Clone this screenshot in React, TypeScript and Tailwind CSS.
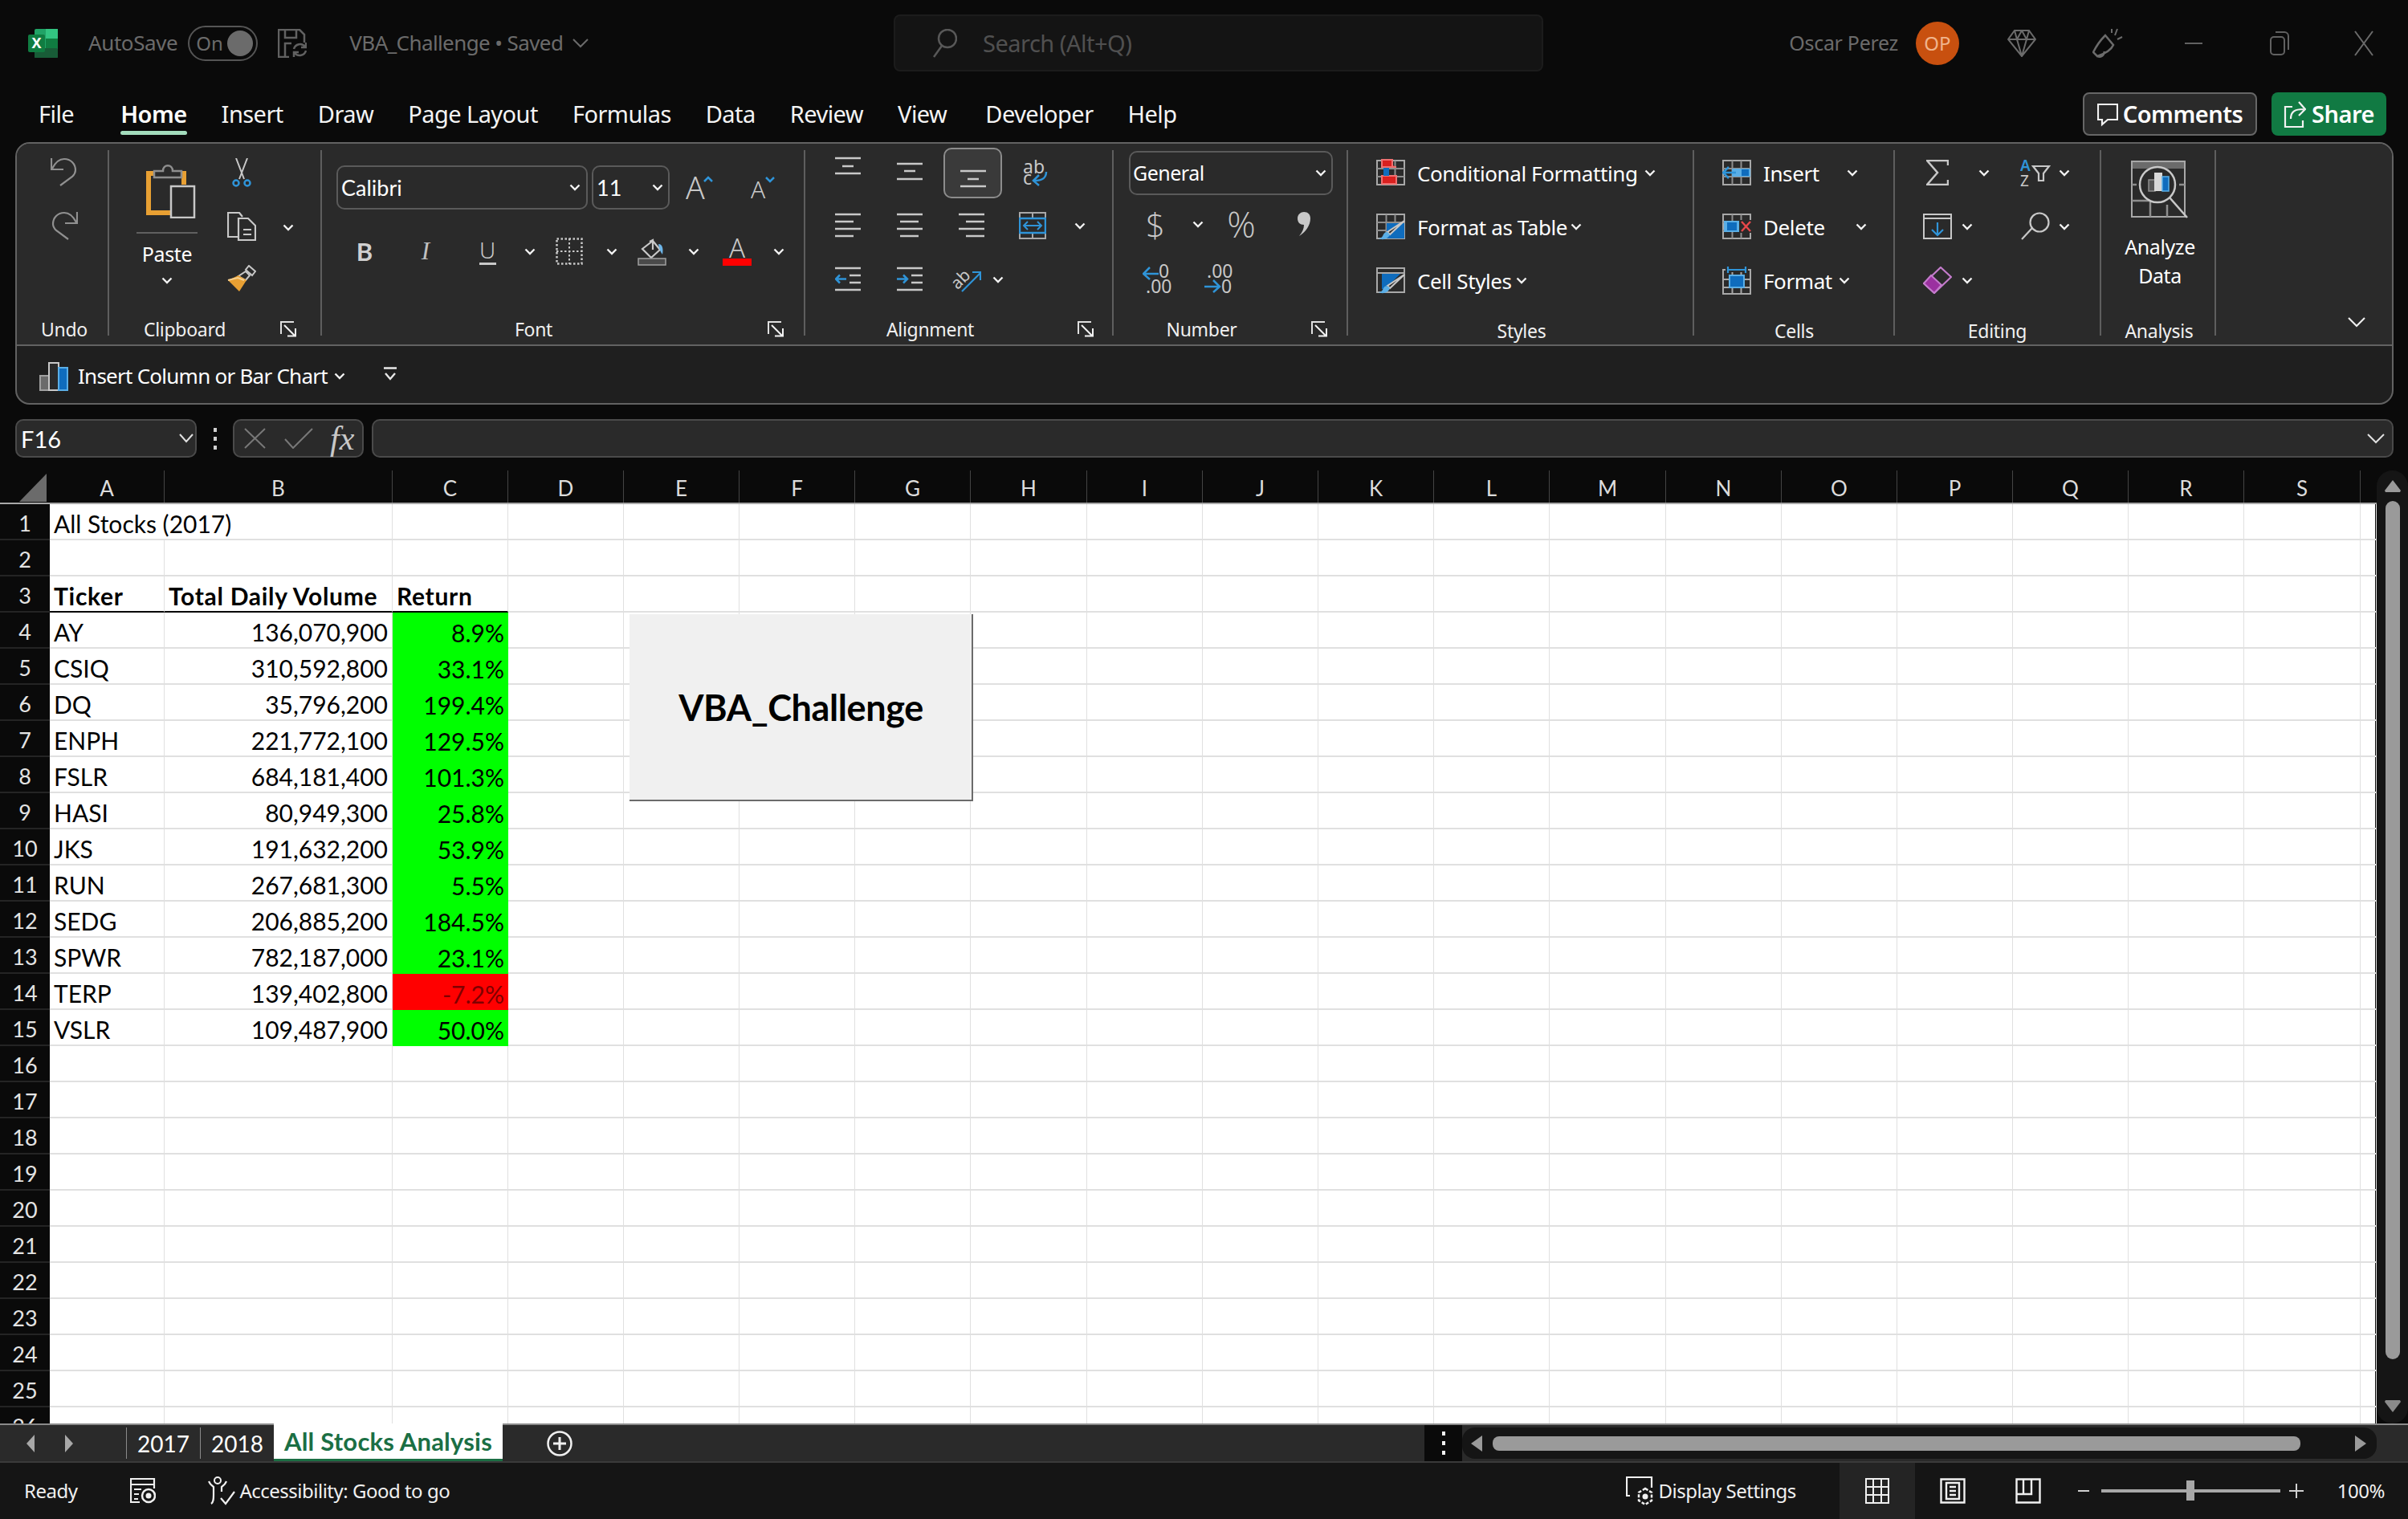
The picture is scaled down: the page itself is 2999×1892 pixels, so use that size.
import type { ReactNode } from "react";

const GREY = "#c8c8c8";
const BLUE = "#2f94d8";

const COLUMNS = ["A", "B", "C", "D", "E", "F", "G", "H", "I", "J", "K", "L", "M", "N", "O", "P", "Q", "R", "S", ""];
const COLUMN_WIDTHS = [
  "w-[143px]", "w-[284px]", "w-[144px]", "w-[144px]", "w-[144px]", "w-[144px]", "w-[144px]", "w-[145px]", "w-[144px]", "w-[144px]",
  "w-[144px]", "w-[144px]", "w-[145px]", "w-[144px]", "w-[144px]", "w-[144px]", "w-[144px]", "w-[144px]", "w-[145px]", "w-[20px]",
];

const STOCKS: Record<number, [string, string, string]> = {
  4: ["AY", "136,070,900", "8.9%"],
  5: ["CSIQ", "310,592,800", "33.1%"],
  6: ["DQ", "35,796,200", "199.4%"],
  7: ["ENPH", "221,772,100", "129.5%"],
  8: ["FSLR", "684,181,400", "101.3%"],
  9: ["HASI", "80,949,300", "25.8%"],
  10: ["JKS", "191,632,200", "53.9%"],
  11: ["RUN", "267,681,300", "5.5%"],
  12: ["SEDG", "206,885,200", "184.5%"],
  13: ["SPWR", "782,187,000", "23.1%"],
  14: ["TERP", "139,402,800", "-7.2%"],
  15: ["VSLR", "109,487,900", "50.0%"],
};

const ROWS = Array.from({ length: 26 }, (_, i) => i + 1);

function Chev() {
  return (
    <svg width="14" height="9" viewBox="0 0 14 9" fill="none" className="shrink-0">
      <path d="M1.5 1.5 7 7l5.5-5.5" stroke="#f2f2f2" strokeWidth="2.4" />
    </svg>
  );
}

function Launcher() {
  return (
    <svg width="20" height="20" viewBox="0 0 20 20" fill="none">
      <path d="M1 16V1h16" stroke="#e0e0e0" strokeWidth="2" />
      <path d="M5 5l13 13M9 18.500h10V9" stroke="#f2f2f2" strokeWidth="2" />
    </svg>
  );
}

function Cell({ className, children }: { className: string; children?: ReactNode }) {
  return <div className={`flex shrink-0 items-center justify-center ${className}`}>{children}</div>;
}

function Group({ className, label, labelClass, launcher, children }: { className: string; label: string; labelClass?: string; launcher?: string; children: ReactNode }) {
  return (
    <div className={`flex h-[231px] shrink-0 flex-col border-r-2 border-[#5e5e5e] ${className}`}>
      <div className="h-[205px] shrink-0">{children}</div>
      <div className="relative flex h-[36px] shrink-0 items-center justify-center">
        <span className={`text-[23px] tracking-[-0.3px] text-[#f0f0f0] ${labelClass ?? ""}`}>{label}</span>
        {launcher && <div className={`absolute top-[8px] ${launcher}`}><Launcher /></div>}
      </div>
    </div>
  );
}

function LineIcon({ lines, height = 32 }: { lines: [number, number, number][]; height?: number }) {
  return (
    <svg width="32" height={height} fill="none">
      <path d={lines.map(([a, b, y]) => `M${a} ${y}H${b}`).join("")} stroke={GREY} strokeWidth="2.500" />
    </svg>
  );
}

function IndentIcon({ right }: { right?: boolean }) {
  return (
    <svg width="32" height="32" fill="none">
      <path d="M0 2H32M18 11H32M18 20H32M0 29H32" stroke={GREY} strokeWidth="2.500" />
      <path d={right ? "M0 15.500H13M8 10.500l5 5-5 5" : "M14 15.500H1M6 10.500l-5 5 5 5"} stroke={BLUE} strokeWidth="2.500" />
    </svg>
  );
}

function TableIcon({ children, noGrid }: { children?: ReactNode; noGrid?: boolean }) {
  return (
    <svg width="36" height="34" viewBox="0 0 36 34" fill="none" className="shrink-0">
      <rect x="1" y="2" width="34" height="30" stroke="#a8a8a8" strokeWidth="2" />
      {!noGrid && <path d="M12.500 2V32M23.500 2V32M1 12H35M1 22H35" stroke="#8e8e8e" strokeWidth="2" />}
      {children}
    </svg>
  );
}

function Brush() {
  return (
    <g>
      <path d="M35 10 17 27l-3-3z" fill="#2a2a2a" stroke={GREY} strokeWidth="2" />
      <path d="M14 24c-4 0-5 3-6 5-1 2-3 3-5 3 4 2 11 2 14-5z" fill="#5aaee6" />
    </g>
  );
}

function Title() {
  return (
    <div className="flex h-[107px] shrink-0 items-center">
      <div className="flex w-[1113px] shrink-0 items-center">
        <svg width="37" height="36" viewBox="0 0 37 36" className="ml-[35px] shrink-0">
          <rect x="8" y="0" width="29" height="36" rx="2" fill="#21a366" />
          <rect x="22" y="0" width="15" height="12" fill="#33c481" />
          <rect x="8" y="24" width="29" height="12" rx="1" fill="#185c37" />
          <rect x="22" y="12" width="15" height="12" fill="#107c41" />
          <rect x="0" y="7" width="21" height="22" rx="2" fill="#107c41" />
          <text x="10.500" y="24" textAnchor="middle" fontSize="18" fontWeight="700" fill="#fff">X</text>
        </svg>
        <span className="ml-[38px] text-[26px] tracking-[-0.4px] text-[#6b6b6b]">AutoSave</span>
        <div className="ml-[13px] flex h-[44px] w-[87px] shrink-0 items-center justify-between rounded-full border-2 border-[#555] pr-[4px] pl-[8px]">
          <span className="text-[24px] text-[#6b6b6b]">On</span>
          <span className="h-[32px] w-[32px] rounded-full bg-[#6b6b6b]" />
        </div>
        <svg width="36" height="36" viewBox="0 0 36 36" fill="none" className="ml-[25px] shrink-0">
          <path d="M14 35H1V1h26l6 6v10" stroke="#616161" strokeWidth="2.500" />
          <path d="M9 1v10h14V1M9 35V18h8" stroke="#616161" strokeWidth="2.500" />
          <path d="M20 25a8 8 0 0 1 14-3M35 27a8 8 0 0 1-14 3M35 17v6h-6M20 35v-6h6" stroke="#616161" strokeWidth="2.500" />
        </svg>
        <span className="ml-[53px] text-[26px] tracking-[-0.6px] text-[#6b6b6b]">VBA_Challenge • Saved</span>
        <svg width="20" height="12" viewBox="0 0 20 12" fill="none" className="ml-[12px] shrink-0">
          <path d="M1 1l9 9 9-9" stroke="#6b6b6b" strokeWidth="2" />
        </svg>
      </div>
      <div className="flex h-[71px] w-[809px] shrink-0 items-center rounded-[8px] border-2 border-[#1c1c1c] bg-[#141414]">
        <svg width="30" height="36" viewBox="0 0 30 36" fill="none" className="ml-[47px] shrink-0">
          <circle cx="18" cy="12" r="11" stroke="#585858" strokeWidth="2.500" />
          <path d="M11 21 1 35" stroke="#585858" strokeWidth="2.500" />
        </svg>
        <span className="ml-[32px] text-[29px] tracking-[-0.5px] text-[#505050]">Search (Alt+Q)</span>
      </div>
      <div className="flex flex-1 items-center justify-end">
        <span className="text-[25px] tracking-[-0.3px] text-[#6b6b6b]">Oscar Perez</span>
        <div className="mr-[24px] ml-[22px] flex h-[54px] w-[54px] items-center justify-center rounded-full bg-[#c8500f] text-[24px] text-[#f0b48c]">OP</div>
        <Cell className="w-[107px]">
          <svg width="36" height="34" viewBox="0 0 36 34" fill="none">
            <path d="M9 1h18l8 11-17 21L1 12zM1 12h34M12 12l6 21 6-21M9 1l3 11 6-11 6 11 3-11" stroke="#6b6b6b" strokeWidth="2" />
          </svg>
        </Cell>
        <Cell className="w-[107px]">
          <svg width="38" height="38" viewBox="0 0 38 38" fill="none">
            <path d="M16 9 26 21c-3 7-14 12-20 14L1 30c3-6 9-15 15-21zM6 35c4 2 8 0 9-6" stroke="#6b6b6b" strokeWidth="2.500" />
            <path d="M28 9l3-8M31 14l6-3M24 6l0-5" stroke="#6b6b6b" strokeWidth="2" />
          </svg>
        </Cell>
        <Cell className="w-[107px]"><span className="h-[2px] w-[22px] bg-[#616161]" /></Cell>
        <Cell className="w-[107px]">
          <svg width="24" height="30" viewBox="0 0 24 30" fill="none">
            <rect x="1" y="7" width="17" height="22" rx="4" stroke="#616161" strokeWidth="2" />
            <path d="M7 1h11a5 5 0 0 1 5 5v17" stroke="#616161" strokeWidth="2" />
          </svg>
        </Cell>
        <Cell className="w-[107px] pr-[4px]">
          <svg width="24" height="32" viewBox="0 0 24 32" fill="none">
            <path d="M1 1l22 30M23 1 1 31" stroke="#6b6b6b" strokeWidth="2" />
          </svg>
        </Cell>
      </div>
    </div>
  );
}

function Tabs() {
  return (
    <div className="flex h-[70px] shrink-0 items-center pr-[27px] pl-[48px]">
      <div className="flex items-center gap-[43px] text-[29px] tracking-[-0.55px] text-[#f4f4f4]">
        <span className="mr-[15px]">File</span>
        <span className="relative font-semibold text-white">
          Home
          <span className="absolute top-[43px] right-0 left-0 h-[5px] rounded-full bg-[#a3dcbc]" />
        </span>
        <span>Insert</span>
        <span>Draw</span>
        <span>Page Layout</span>
        <span>Formulas</span>
        <span>Data</span>
        <span>Review</span>
        <span>View</span>
        <span className="ml-[5px]">Developer</span>
        <span>Help</span>
      </div>
      <div className="ml-auto flex items-center gap-[18px]">
        <div className="flex h-[54px] w-[217px] items-center justify-center gap-[6px] rounded-[8px] border-2 border-[#666] bg-[#2a2a2a]">
          <svg width="26" height="34" viewBox="0 0 26 34" fill="none" className="shrink-0">
            <path d="M1 5h24v19H13l-7 6v-6H1z" stroke="#f2f2f2" strokeWidth="2.200" />
          </svg>
          <span className="text-[29px] font-semibold tracking-[-0.5px]">Comments</span>
        </div>
        <div className="flex h-[54px] w-[143px] items-center justify-center gap-[7px] rounded-[8px] bg-[#117a43]">
          <svg width="28" height="36" viewBox="0 0 28 36" fill="none" className="shrink-0">
            <path d="M11 9H2v25h22v-8" stroke="#f2f2f2" strokeWidth="2.200" />
            <path d="M9 24c0-9 5-12 16-12M19 3l8 9-8 8" stroke="#f2f2f2" strokeWidth="2.200" />
          </svg>
          <span className="text-[29px] font-semibold tracking-[-0.5px]">Share</span>
        </div>
      </div>
    </div>
  );
}

function UndoGroup() {
  return (
    <Group className="w-[115px] pl-[5px]" label="Undo">
      <div className="flex flex-col items-center pt-[9px]">
        <svg width="34" height="36" viewBox="0 0 34 36" fill="none">
          <path d="M1 1v14h15M2 14C6 6 11 2 17 2c8 0 14 6 14 14 0 4-2 6-4 8L12 35" stroke="#909090" strokeWidth="2.200" />
        </svg>
        <svg width="34" height="36" viewBox="0 0 34 36" fill="none" className="mt-[31px] -scale-x-100">
          <path d="M1 1v14h15M2 14C6 6 11 2 17 2c8 0 14 6 14 14 0 4-2 6-4 8L12 35" stroke="#909090" strokeWidth="2.200" />
        </svg>
      </div>
    </Group>
  );
}

function ClipboardGroup() {
  return (
    <Group className="w-[265px] pr-[15px]" label="Clipboard" labelClass="ml-[-60px]" launcher="right-[15px]">
      <div className="flex">
        <div className="ml-[34px] flex w-[76px] shrink-0 flex-col items-center pt-[17px]">
          <svg width="62" height="68" viewBox="0 0 62 68" fill="none" className="ml-[10px]">
            <path d="M44 12h3v14M16 12H3v49h28" stroke="#e8a033" strokeWidth="6" />
            <path d="M10 17V9h11c0-9 12-9 12 0h11v8z" fill="#2a2a2a" stroke="#8e8e8e" strokeWidth="2.500" />
            <rect x="31" y="28" width="29" height="39" fill="#2a2a2a" stroke={GREY} strokeWidth="2.500" />
          </svg>
          <div className="mt-[17px] h-[2px] w-[76px] bg-[#606060]" />
          <span className="mt-[8px] text-[25px] leading-[34px] tracking-[-0.4px]">Paste</span>
          <div className="mt-[12px]"><Chev /></div>
        </div>
        <div className="ml-[37px] flex w-[36px] shrink-0 flex-col items-center pt-[10px]">
          <svg width="24" height="36" viewBox="0 0 24 36" fill="none">
            <path d="M5 0l10 26M19 0 9 26" stroke={GREY} strokeWidth="2" />
            <circle cx="5" cy="31" r="3.500" stroke={BLUE} strokeWidth="2.500" />
            <circle cx="19" cy="31" r="3.500" stroke={BLUE} strokeWidth="2.500" />
          </svg>
          <svg width="36" height="36" viewBox="0 0 36 36" fill="none" className="mt-[31px]">
            <path d="M13 31H1V1h14l4 5" stroke={GREY} strokeWidth="2.200" />
            <path d="M14 8h12l9 9v18H14z" fill="#2a2a2a" stroke={GREY} strokeWidth="2.200" />
            <path d="M20 22h10M20 28h10" stroke={GREY} strokeWidth="2" />
          </svg>
          <svg width="36" height="34" viewBox="0 0 36 34" fill="none" className="mt-[30px]">
            <path d="M27 1l8 7-4 5-8-7z" fill="#2a2a2a" stroke={GREY} strokeWidth="2" />
            <path d="M23 8l5 5-5 6-9-5z" fill="#2a2a2a" stroke={GREY} strokeWidth="2" />
            <path d="M14 13 1 19l14 14 9-14z" fill="#e8a033" />
            <path d="M1 19l12-3 8 3" stroke="#f5cf8f" strokeWidth="2" />
          </svg>
        </div>
        <div className="ml-[33px] pt-[92px]"><Chev /></div>
      </div>
    </Group>
  );
}

function FontGroup() {
  return (
    <Group className="w-[602px] pr-[20px] pl-[15px]" label="Font" labelClass="ml-[-68px]" launcher="right-[5px]">
      <div className="mt-[19px] flex h-[55px] items-center pl-[3px]">
        <div className="flex h-[55px] w-[313px] shrink-0 items-center justify-between rounded-[10px] border-2 border-[#5a5a5a] pr-[7px] pl-[4px]">
          <span className="pt-[2px] font-['Lato',sans-serif] text-[27px]">Calibri</span>
          <Chev />
        </div>
        <div className="ml-[5px] flex h-[55px] w-[97px] shrink-0 items-center justify-between rounded-[10px] border-2 border-[#5a5a5a] pr-[6px] pl-[4px]">
          <span className="pt-[2px] font-['Lato',sans-serif] text-[27px]">11</span>
          <Chev />
        </div>
        <svg width="36" height="32" viewBox="0 0 36 32" className="ml-[20px] shrink-0">
          <text x="0" y="30" fontSize="39" fontWeight="300" fill={GREY}>A</text>
          <path d="M23 8l5-5 5 5" fill="none" stroke={BLUE} strokeWidth="2.500" />
        </svg>
        <svg width="30" height="30" viewBox="0 0 30 30" className="ml-[45px] shrink-0">
          <text x="0" y="28" fontSize="30" fontWeight="300" fill={GREY}>A</text>
          <path d="M19 2l5 5 5-5" fill="none" stroke={BLUE} strokeWidth="2.500" />
        </svg>
      </div>
      <div className="mt-[22px] flex h-[60px] items-center">
        <Cell className="w-[76px]"><span className="font-['Lato',sans-serif] text-[31px] font-bold text-[#d0d0d0]">B</span></Cell>
        <Cell className="w-[76px]"><span className="font-['Liberation_Serif',serif] text-[31px] text-[#c0c0c0] italic">I</span></Cell>
        <Cell className="w-[78px]">
          <div className="flex flex-col items-center">
            <span className="text-[28px] leading-[30px] font-light text-[#c8c8c8]">U</span>
            <span className="mt-[1px] h-[3px] w-[21px] bg-[#c8c8c8]" />
          </div>
        </Cell>
        <Cell className="w-[28px]"><Chev /></Cell>
        <Cell className="w-[70px]">
          <svg width="34" height="34" viewBox="0 0 34 34" fill="none">
            <rect x="1.500" y="1.500" width="31" height="31" stroke={GREY} strokeWidth="2.500" strokeDasharray="2.500 2.500" />
            <path d="M17 1V33M1 17H33" stroke={GREY} strokeWidth="2" strokeDasharray="2.500 2.500" />
          </svg>
        </Cell>
        <Cell className="w-[36px]"><Chev /></Cell>
        <Cell className="w-[64px]">
          <svg width="36" height="36" viewBox="0 0 36 36" fill="none">
            <path d="M15 6 19 4v12M19 5l9 11-11 10L6 15z" stroke={GREY} strokeWidth="2.200" />
            <path d="M26 9c6 0 6 8 5 13-2-3-4-6-5-13z" fill="#6db5e8" />
            <rect x="1" y="27" width="34" height="8" fill="#4a4a4a" stroke="#a0a0a0" strokeWidth="1.500" />
          </svg>
        </Cell>
        <Cell className="w-[40px]"><Chev /></Cell>
        <Cell className="w-[68px]">
          <svg width="36" height="36" viewBox="0 0 36 36">
            <text x="18" y="26" textAnchor="middle" fontSize="33" fontWeight="300" fill={GREY}>A</text>
            <rect x="0" y="27" width="36" height="9" fill="#ff0000" />
          </svg>
        </Cell>
        <Cell className="w-[36px]"><Chev /></Cell>
      </div>
    </Group>
  );
}

function AlignmentGroup() {
  return (
    <Group className="w-[384px] pl-[15px]" label="Alignment" labelClass="ml-[-86px]" launcher="right-[23px]">
      <div className="-mt-[3px] flex h-[63px] items-center">
        <Cell className="w-[76px]"><LineIcon height={63} lines={[[0, 32, 13], [9, 23, 23], [0, 32, 32]]} /></Cell>
        <Cell className="w-[78px]"><LineIcon height={63} lines={[[0, 32, 20], [9, 23, 29], [0, 32, 39]]} /></Cell>
        <Cell className="ml-[3px] h-[63px] w-[73px] rounded-[10px] border-2 border-[#8c8c8c] bg-[#3a3a3a]"><LineIcon height={59} lines={[[0, 32, 27], [9, 23, 37], [0, 32, 46]]} /></Cell>
        <Cell className="w-[84px]">
          <svg width="32" height="34" viewBox="0 0 32 34" fill="none">
            <text x="0" y="17" fontSize="23" fill={GREY}>ab</text>
            <text x="0" y="31" fontSize="23" fill={GREY}>c</text>
            <path d="M29 15c0 8-5 11-15 11M20 19l-7 7 7 6" stroke={BLUE} strokeWidth="2.500" />
          </svg>
        </Cell>
      </div>
      <div className="flex h-[68px] items-center">
        <Cell className="w-[76px]"><LineIcon lines={[[0, 32, 2], [0, 23, 11], [0, 32, 20], [0, 23, 29]]} /></Cell>
        <Cell className="w-[78px]"><LineIcon lines={[[0, 32, 2], [4, 27, 11], [0, 32, 20], [4, 27, 29]]} /></Cell>
        <Cell className="w-[76px]"><LineIcon lines={[[0, 32, 2], [9, 32, 11], [0, 32, 20], [9, 32, 29]]} /></Cell>
        <Cell className="w-[84px] pr-[8px]">
          <svg width="34" height="34" viewBox="0 0 34 34" fill="none">
            <rect x="1" y="1" width="32" height="32" stroke="#a8a8a8" strokeWidth="2" />
            <path d="M17 1v7M17 26v7" stroke="#a8a8a8" strokeWidth="2" />
            <rect x="1" y="8" width="32" height="18" stroke={BLUE} strokeWidth="2.500" />
            <path d="M6 17h22M11 12l-5 5 5 5M23 12l5 5-5 5" stroke={BLUE} strokeWidth="2" />
          </svg>
        </Cell>
        <Cell className="w-[26px]"><Chev /></Cell>
      </div>
      <div className="flex h-[66px] items-center">
        <Cell className="w-[76px]"><IndentIcon /></Cell>
        <Cell className="w-[78px]"><IndentIcon right /></Cell>
        <div className="ml-[14px] shrink-0">
          <svg width="36" height="34" viewBox="0 0 36 34" fill="none">
            <text x="0" y="25" fontSize="21" fill={GREY} transform="rotate(-45 10 20)">ab</text>
            <path d="M12 32 35 9M25 8h10v10" stroke={BLUE} strokeWidth="2.200" />
          </svg>
        </div>
        <div className="ml-[14px]"><Chev /></div>
      </div>
    </Group>
  );
}

function NumberGroup() {
  return (
    <Group className="w-[292px] pl-[19px]" label="Number" labelClass="ml-[-90px]" launcher="right-[24px]">
      <div className="mt-[1px] flex h-[55px] w-[254px] items-center justify-between rounded-[10px] border-2 border-[#5a5a5a] pr-[6px] pl-[3px]">
        <span className="pt-[1px] text-[25px] tracking-[-0.5px]">General</span>
        <Chev />
      </div>
      <div className="mt-[10px] flex h-[52px] items-center">
        <Cell className="ml-[1px] w-[64px]"><span className="font-['Open_Sans',sans-serif] text-[42px] font-light text-[#c8c8c8]">$</span></Cell>
        <Cell className="w-[42px]"><Chev /></Cell>
        <Cell className="w-[66px]"><span className="font-['Open_Sans',sans-serif] text-[44px] font-light text-[#c8c8c8]">%</span></Cell>
        <Cell className="w-[90px]">
          <svg width="18" height="30" viewBox="0 0 18 30">
            <path d="M9 0c5 0 8 3 8 8 0 9-6 17-14 22 4-5 6-9 6-14-5 0-8-3-8-8s4-8 8-8z" fill={GREY} />
          </svg>
        </Cell>
      </div>
      <div className="mt-[24px] flex h-[38px] items-center pl-[17px]">
        <svg width="36" height="38" viewBox="0 0 36 38" fill="none" className="shrink-0">
          <text x="20" y="17" fontSize="23" fill={GREY}>0</text>
          <text x="4" y="36" fontSize="23" fill={GREY}>.00</text>
          <path d="M20 12H2M9 4l-8 8 8 7" stroke={BLUE} strokeWidth="2.500" />
        </svg>
        <svg width="36" height="38" viewBox="0 0 36 38" fill="none" className="ml-[40px] shrink-0">
          <text x="4" y="17" fontSize="23" fill={GREY}>.00</text>
          <text x="22" y="36" fontSize="23" fill={GREY}>0</text>
          <path d="M1 28h18M12 20l8 8-8 7" stroke={BLUE} strokeWidth="2.500" />
        </svg>
      </div>
    </Group>
  );
}

function ActionRow({ icon, label, chevClass, rowClass }: { icon: ReactNode; label: string; chevClass: string; rowClass: string }) {
  return (
    <div className={`flex h-[34px] items-center ${rowClass}`}>
      {icon}
      <span className="ml-[15px] pt-[3px] text-[26px] tracking-[-0.4px] whitespace-nowrap">{label}</span>
      <div className={chevClass}><Chev /></div>
    </div>
  );
}

function StylesGroup() {
  return (
    <Group className="w-[431px] pl-[35px]" label="Styles" labelClass="ml-[-32px] mt-[5px]">
      <ActionRow
        rowClass="mt-[11px]"
        label="Conditional Formatting"
        chevClass="ml-[9px]"
        icon={
          <TableIcon>
            <path d="M7 1h13v9h5v0M7 1h13v9H7zM7 21h18v10H7z" fill="#d9201f" stroke="#f07070" strokeWidth="2" />
            <rect x="9" y="11" width="7" height="10" fill="#0f6cbd" />
          </TableIcon>
        }
      />
      <ActionRow
        rowClass="mt-[33px]"
        label="Format as Table"
        chevClass="ml-[4px]"
        icon={
          <TableIcon>
            <path d="M13 13H35V32H13z" fill="#0f6cbd" />
            <Brush />
          </TableIcon>
        }
      />
      <ActionRow
        rowClass="mt-[33px]"
        label="Cell Styles"
        chevClass="ml-[5px]"
        icon={
          <TableIcon noGrid>
            <path d="M1 8H35" stroke="#a8a8a8" strokeWidth="2" />
            <path d="M7 9H30L11 28H7z" fill="#0f6cbd" />
            <Brush />
          </TableIcon>
        }
      />
    </Group>
  );
}

function CellsGroup() {
  return (
    <Group className="w-[250px] pl-[35px]" label="Cells" labelClass="ml-[-34px] mt-[5px]">
      <ActionRow
        rowClass="mt-[11px]"
        label="Insert"
        chevClass="ml-[34px]"
        icon={
          <TableIcon>
            <rect x="12" y="12" width="23" height="10" fill="#5aaee6" />
            <rect x="24" y="13" width="9" height="8" fill="#0f6cbd" />
            <path d="M17 17H1M8 10l-7 7 7 7" stroke={BLUE} strokeWidth="2.500" />
          </TableIcon>
        }
      />
      <ActionRow
        rowClass="mt-[33px]"
        label="Delete"
        chevClass="ml-[38px]"
        icon={
          <TableIcon>
            <rect x="2" y="10" width="20" height="14" fill="#5aaee6" />
            <rect x="6" y="12" width="12" height="10" fill="#0f6cbd" />
            <rect x="21" y="9" width="15" height="16" fill="#2a2a2a" />
            <path d="M24 11l11 12M35 11 24 23" stroke="#e8484a" strokeWidth="2.500" />
          </TableIcon>
        }
      />
      <ActionRow
        rowClass="mt-[33px]"
        label="Format"
        chevClass="ml-[8px]"
        icon={
          <svg width="36" height="36" viewBox="0 0 36 36" fill="none" className="shrink-0">
            <path d="M4 5H1v30h34V5h-3M1 17H35M1 27H35M12.500 8V35M23.500 8V35" stroke="#a8a8a8" strokeWidth="2" />
            <rect x="9" y="12" width="18" height="15" fill="#0f6cbd" stroke="#5aaee6" strokeWidth="2" />
            <path d="M7 5H29M7 1v8M29 1v8" stroke={BLUE} strokeWidth="2.200" />
          </svg>
        }
      />
    </Group>
  );
}

function EditingGroup() {
  return (
    <Group className="w-[257px]" label="Editing" labelClass="mt-[5px]">
      <div className="mt-[11px] flex h-[34px] items-center">
        <Cell className="ml-[35px] w-[36px]">
          <svg width="28" height="32" viewBox="0 0 28 32" fill="none">
            <path d="M27 7V1H1l13 15L1 31h26v-6" stroke={GREY} strokeWidth="2.500" />
          </svg>
        </Cell>
        <div className="ml-[33px]"><Chev /></div>
        <svg width="38" height="36" viewBox="0 0 38 36" fill="none" className="ml-[38px] shrink-0">
          <text x="0" y="16" fontSize="19" fontWeight="600" fill={BLUE}>A</text>
          <text x="0" y="35" fontSize="19" fill={GREY}>Z</text>
          <path d="M16 10h20l-7 9v9h-6v-9z" stroke={GREY} strokeWidth="2.200" />
        </svg>
        <div className="ml-[10px]"><Chev /></div>
      </div>
      <div className="mt-[33px] flex h-[34px] items-center">
        <Cell className="ml-[35px] w-[36px]">
          <svg width="36" height="32" viewBox="0 0 36 32" fill="none">
            <rect x="1" y="1" width="34" height="30" stroke={GREY} strokeWidth="2" />
            <path d="M1 6H35" stroke={GREY} strokeWidth="2" />
            <path d="M18 11v16M11 20l7 7 7-7" stroke={BLUE} strokeWidth="2.200" />
          </svg>
        </Cell>
        <div className="ml-[12px]"><Chev /></div>
        <svg width="36" height="36" viewBox="0 0 36 36" fill="none" className="ml-[60px] shrink-0">
          <circle cx="23" cy="13" r="11.500" stroke={GREY} strokeWidth="2.200" />
          <path d="M14 20 1 34" stroke={GREY} strokeWidth="2.200" />
        </svg>
        <div className="ml-[11px]"><Chev /></div>
      </div>
      <div className="mt-[33px] flex h-[34px] items-center">
        <Cell className="ml-[35px] w-[36px]">
          <svg width="36" height="34" viewBox="0 0 36 34" fill="none">
            <path d="M22 1 35 13 14 33 1 21z" stroke="#c47ccc" strokeWidth="2.200" />
            <path d="M1 21 10 11 23 23l-9 10z" fill="#9b30a0" stroke="#c47ccc" strokeWidth="2" />
          </svg>
        </Cell>
        <div className="ml-[12px]"><Chev /></div>
      </div>
    </Group>
  );
}

function AnalysisGroup() {
  return (
    <Group className="w-[143px] pl-[5px]" label="Analysis" labelClass="ml-[-2px] mt-[5px]">
      <div className="flex flex-col items-center pt-[13px]">
        <svg width="72" height="72" viewBox="0 0 72 72" fill="none">
          <rect x="1" y="1" width="66" height="69" stroke="#a8a8a8" strokeWidth="2" />
          <rect x="2" y="2" width="64" height="8" fill="#6b6b6b" />
          <path d="M1 50H26M24 50V70M45 55V70M1 30h6M60 30h7" stroke="#8e8e8e" strokeWidth="2.500" />
          <circle cx="33" cy="30" r="22" fill="#2a2a2a" stroke={GREY} strokeWidth="2.500" />
          <path d="M48 46l22 25" stroke={GREY} strokeWidth="2.500" />
          <rect x="22" y="24" width="8" height="14" fill="#555" stroke="#8e8e8e" strokeWidth="1.500" />
          <rect x="29" y="15" width="10" height="23" fill="#d8d8d8" />
          <rect x="39" y="20" width="8" height="18" fill="#0f6cbd" stroke="#5aaee6" strokeWidth="1.500" />
        </svg>
        <span className="mt-[17px] text-[25px] leading-[36px] tracking-[-0.4px]">Analyze</span>
        <span className="text-[25px] leading-[36px] tracking-[-0.4px]">Data</span>
      </div>
    </Group>
  );
}

function Ribbon() {
  return (
    <div className="ml-[19px] flex h-[327px] w-[2962px] shrink-0 flex-col overflow-hidden rounded-[18px] border-2 border-[#626262] bg-[#1f1f1f]">
      <div className="relative flex h-[252px] shrink-0 border-b-2 border-[#626262] bg-[#2a2a2a] pt-[8px]">
        <UndoGroup />
        <ClipboardGroup />
        <FontGroup />
        <AlignmentGroup />
        <NumberGroup />
        <StylesGroup />
        <CellsGroup />
        <EditingGroup />
        <AnalysisGroup />
        <svg width="22" height="13" viewBox="0 0 22 13" fill="none" className="absolute top-[216px] right-[33px]">
          <path d="M1 1l10 10L21 1" stroke="#eeeeee" strokeWidth="2.200" />
        </svg>
      </div>
      <div className="flex flex-1 items-center pt-[4px] pl-[28px]">
        <svg width="36" height="36" viewBox="0 0 36 36" className="shrink-0">
          <rect x="1" y="17" width="11" height="18" fill="#6b6b6b" stroke="#a0a0a0" strokeWidth="2" />
          <rect x="12" y="1" width="12" height="34" fill="#2a2a2a" stroke={GREY} strokeWidth="2" />
          <rect x="24" y="7" width="11" height="28" fill="#0f6cbd" stroke="#5aaee6" strokeWidth="2" />
        </svg>
        <span className="ml-[12px] text-[26px] tracking-[-0.75px]">Insert Column or Bar Chart</span>
        <div className="ml-[8px]"><Chev /></div>
        <svg width="16" height="18" viewBox="0 0 16 18" fill="none" className="-mt-[6px] ml-[48px]">
          <path d="M0 1.500H16M2 8l6 7 6-7" stroke="#e8e8e8" strokeWidth="2.400" />
        </svg>
      </div>
    </div>
  );
}

function FormulaBar() {
  return (
    <div className="mt-[18px] flex h-[48px] shrink-0 items-stretch pl-[19px]">
      <div className="flex w-[226px] items-center justify-between rounded-[10px] border-2 border-[#4a4a4a] bg-[#2a2a2a] pr-[2px] pl-[5px]">
        <span className="pt-[2px] font-['Lato',sans-serif] text-[29px]">F16</span>
        <svg width="18" height="12" viewBox="0 0 18 12" fill="none"><path d="M1 1l8 9 8-9" stroke="#e0e0e0" strokeWidth="2" /></svg>
      </div>
      <div className="flex w-[45px] flex-col items-center justify-center gap-[6px]">
        <span className="h-[5px] w-[4px] bg-[#d0d0d0]" />
        <span className="h-[5px] w-[4px] bg-[#d0d0d0]" />
        <span className="h-[5px] w-[4px] bg-[#d0d0d0]" />
      </div>
      <div className="flex w-[163px] items-center rounded-[10px] border-2 border-[#4a4a4a] bg-[#2a2a2a]">
        <svg width="28" height="26" viewBox="0 0 28 26" fill="none" className="ml-[12px] shrink-0"><path d="M1 1l25 24M26 1 1 25" stroke="#787878" strokeWidth="2" /></svg>
        <svg width="36" height="26" viewBox="0 0 36 26" fill="none" className="ml-[22px] shrink-0"><path d="M1 14l10 11L35 1" stroke="#787878" strokeWidth="2" /></svg>
        <span className="ml-[21px] font-['Liberation_Serif',serif] text-[42px] leading-none text-[#c8c8c8] italic">fx</span>
      </div>
      <div className="ml-[10px] flex w-[2518px] items-center justify-end rounded-[10px] border-2 border-[#4a4a4a] bg-[#2a2a2a] pr-[9px]">
        <svg width="22" height="13" viewBox="0 0 22 13" fill="none"><path d="M1 1l10 10L21 1" stroke="#e0e0e0" strokeWidth="2" /></svg>
      </div>
    </div>
  );
}

function SheetRow({ row }: { row: number }) {
  const stock = STOCKS[row];
  return (
    <div className="flex h-[45px] shrink-0 bg-white font-['Lato',sans-serif] text-[30px] leading-none text-black">
      {COLUMN_WIDTHS.map((width, i) => {
        let content: ReactNode = null;
        let extra = "border-r border-b-2 border-[#e0e0e0]";
        if (row === 1 && i === 0) {
          content = <span className="whitespace-nowrap">All Stocks (2017)</span>;
          extra = "border-b-2 border-[#e0e0e0]";
        }
        if (row === 3 && i < 3) {
          content = <span className="font-bold tracking-[0.7px] whitespace-nowrap">{["Ticker", "Total Daily Volume", "Return"][i]}</span>;
          extra = "border-r border-r-[#e0e0e0] border-b-2 border-b-black";
        }
        if (stock && i === 0) content = <span>{stock[0]}</span>;
        if (stock && i === 1) {
          content = <span className="ml-auto">{stock[1]}</span>;
        }
        if (stock && i === 2) {
          const loss = row === 14;
          content = <span className={`ml-auto ${loss ? "text-[#800000]" : ""}`}>{stock[2]}</span>;
          extra = loss ? "bg-[#ff0000]" : "bg-[#00ff00]";
        }
        return (
          <div key={i} className={`flex shrink-0 items-center pt-[4px] pr-[5px] pl-[5px] ${width} ${extra}`}>
            {content}
          </div>
        );
      })}
    </div>
  );
}

function VerticalScroll() {
  return (
    <div className="flex h-full w-[39px] shrink-0 flex-col items-center rounded-full bg-[#151515] pt-[12px]">
      <svg width="20" height="15" viewBox="0 0 20 15"><path d="M10 0 20 13l-1 2H1l-1-2z" fill="#9a9a9a" /></svg>
      <div className="mt-[11px] h-[1069px] w-[18px] rounded-full bg-[#9a9a9a]" />
      <svg width="20" height="16" viewBox="0 0 20 16" className="mt-[50px] rotate-180"><path d="M10 0 20 13l-1 2H1l-1-2z" fill="#8a8a8a" /></svg>
    </div>
  );
}

function Sheet() {
  return (
    <div className="mt-[16px] flex h-[1187px] shrink-0">
      <div className="flex w-[2960px] shrink-0 flex-col overflow-hidden font-['Lato',sans-serif]">
        <div className="flex h-[42px] shrink-0 border-b-2 border-[#a8a8a8] text-[26px] text-[#dcdcdc]">
          <div className="flex w-[62px] shrink-0 items-start justify-end pt-[4px] pr-[4px]">
            <svg width="34" height="35" viewBox="0 0 34 35"><path d="M34 0V35H0z" fill="#6b6b6b" /></svg>
          </div>
          {COLUMNS.map((col, i) => (
            <div key={i} className={`flex shrink-0 items-center justify-center border-r border-[#444] pt-[4px] ${COLUMN_WIDTHS[i]} ${i === 19 ? "border-r-0" : ""}`}>
              {col}
            </div>
          ))}
        </div>
        <div className="flex h-[1145px] overflow-hidden">
          <div className="flex w-[62px] shrink-0 flex-col text-[27px] leading-none text-[#e4e4e4]">
            {ROWS.map((row) => (
              <div key={row} className="flex h-[45px] shrink-0 items-center justify-center border-b-2 border-[#242424] pt-[4px]">
                {row}
              </div>
            ))}
          </div>
          <div className="relative w-[2896px] shrink-0">
            {ROWS.map((row) => (
              <SheetRow key={row} row={row} />
            ))}
            <div className="absolute top-[137px] left-[722px] flex h-[233px] w-[428px] items-center justify-center border-r-2 border-b-2 border-[#6b6b6b] bg-[#f0f0f0] pt-[2px]">
              <span className="pl-[1px] text-[45px] font-bold tracking-[-0.4px] text-black">VBA_Challenge</span>
            </div>
          </div>
        </div>
      </div>
      <VerticalScroll />
    </div>
  );
}

function SheetTabs() {
  return (
    <div className="flex h-[49px] shrink-0 items-stretch border-t-2 border-b-2 border-t-[#8a8a8a] border-b-[#3a3a3a] bg-[#2a2a2a]">
      <div className="flex w-[157px] shrink-0 items-center pl-[33px]">
        <svg width="10" height="22" viewBox="0 0 10 22"><path d="M10 0v22L0 11z" fill="#a8a8a8" /></svg>
        <svg width="10" height="22" viewBox="0 0 10 22" className="ml-[38px]"><path d="M0 0v22l10-11z" fill="#a8a8a8" /></svg>
      </div>
      <div className="my-[3px] flex w-[92px] shrink-0 items-center justify-center border-l border-[#8a8a8a] font-['Lato',sans-serif] text-[28px]">2017</div>
      <div className="my-[3px] flex w-[92px] shrink-0 items-center justify-center border-l border-[#8a8a8a] font-['Lato',sans-serif] text-[28px]">2018</div>
      <div className="-mt-[2px] flex w-[285px] shrink-0 items-center justify-center border-b-[3px] border-[#1b6f44] bg-white font-['Lato',sans-serif] text-[31px] font-bold tracking-[0.2px] text-[#1b6f44]">
        All Stocks Analysis
      </div>
      <div className="ml-[55px] flex items-center">
        <svg width="32" height="32" viewBox="0 0 32 32" fill="none">
          <circle cx="16" cy="16" r="14.500" stroke="#f0f0f0" strokeWidth="2.500" />
          <path d="M16 8V24M8 16H24" stroke="#f0f0f0" strokeWidth="3" />
        </svg>
      </div>
      <div className="ml-auto flex w-[47px] shrink-0 flex-col items-center justify-center gap-[7px] bg-[#0a0a0a]">
        <span className="h-[5px] w-[4px] bg-[#f0f0f0]" />
        <span className="h-[5px] w-[4px] bg-[#f0f0f0]" />
        <span className="h-[5px] w-[4px] bg-[#f0f0f0]" />
      </div>
      <div className="my-[3px] flex w-[1139px] shrink-0 items-center rounded-[16px] bg-[#151515] pl-[11px]">
        <svg width="14" height="20" viewBox="0 0 14 20"><path d="M14 0v20L0 10z" fill="#9a9a9a" /></svg>
        <div className="ml-[13px] h-[18px] w-[1006px] rounded-[8px] bg-[#9a9a9a]" />
        <svg width="14" height="20" viewBox="0 0 14 20" className="ml-[68px]"><path d="M0 0v20l14-10z" fill="#9a9a9a" /></svg>
      </div>
      <div className="w-[39px] shrink-0" />
    </div>
  );
}

function StatusBar() {
  return (
    <div className="flex flex-1 items-center bg-[#151515] text-[24px] tracking-[-0.5px] text-[#f0f0f0]">
      <span className="ml-[30px]">Ready</span>
      <svg width="32" height="32" viewBox="0 0 32 32" fill="none" className="ml-[66px] shrink-0">
        <path d="M12 30H1V1h29v12M1 8h29M5 14h9M5 20h6M5 26h5" stroke="#f0f0f0" strokeWidth="2.200" />
        <circle cx="23" cy="22" r="8" stroke="#f0f0f0" strokeWidth="2.500" />
        <circle cx="23" cy="22" r="3.500" fill="#f0f0f0" />
      </svg>
      <svg width="34" height="36" viewBox="0 0 34 36" fill="none" className="ml-[65px] shrink-0">
        <circle cx="12" cy="5" r="4" stroke="#f0f0f0" strokeWidth="2" />
        <path d="M1 6c2 5 5 6 6 7v10c0 5 0 9-3 11M23 6c-2 5-5 6-6 7v6" stroke="#f0f0f0" strokeWidth="2.200" />
        <path d="M16 27l6 7 11-15" stroke="#f0f0f0" strokeWidth="2.200" />
      </svg>
      <span className="ml-[5px]">Accessibility: Good to go</span>
      <div className="ml-auto flex h-full items-center">
        <svg width="34" height="36" viewBox="0 0 34 36" fill="none" className="shrink-0">
          <path d="M5 24H1V1h31v13" stroke="#f0f0f0" strokeWidth="2.200" />
          <circle cx="24" cy="25" r="3.500" fill="#f0f0f0" />
          <path d="M24 15l8 5v10l-8 5-8-5V20z" stroke="#f0f0f0" strokeWidth="2.500" strokeDasharray="4 2" />
        </svg>
        <span className="ml-[6px]">Display Settings</span>
        <div className="ml-[54px] flex h-full w-[94px] items-center justify-center bg-[#242424]">
          <svg width="30" height="32" viewBox="0 0 30 32" fill="none">
            <path d="M1 1H29V31H1zM10 1V31M20 1V31M1 11H29M1 21H29" stroke="#f0f0f0" strokeWidth="2" />
          </svg>
        </div>
        <svg width="32" height="32" viewBox="0 0 32 32" fill="none" className="ml-[31px]">
          <path d="M1.500 1.500H30.500V30.500H1.500zM8 6H24V26H8zM12 11H20M12 16H20M12 21H20" stroke="#f0f0f0" strokeWidth="2.400" />
        </svg>
        <svg width="32" height="32" viewBox="0 0 32 32" fill="none" className="ml-[62px]">
          <path d="M1.500 1.500H30.500V30.500H1.500zM1.500 20H20V1.500M10 1.500V20" stroke="#f0f0f0" strokeWidth="2.400" />
        </svg>
        <span className="ml-[46px] h-[2px] w-[14px] bg-[#d0d0d0]" />
        <div className="relative ml-[15px] h-[4px] w-[223px] bg-[#a8a8a8]">
          <span className="absolute top-[-11px] left-[106px] h-[25px] w-[10px] bg-[#a8a8a8]" />
        </div>
        <svg width="18" height="18" viewBox="0 0 18 18" fill="none" className="ml-[11px]">
          <path d="M9 0V18M0 9H18" stroke="#d0d0d0" strokeWidth="2" />
        </svg>
        <span className="mr-[29px] ml-[42px]">100%</span>
      </div>
    </div>
  );
}

export default function App() {
  return (
    <div className="flex h-[1892px] w-[2999px] flex-col overflow-hidden bg-[#0a0a0a] font-['Noto_Sans',sans-serif] text-white">
      <Title />
      <Tabs />
      <Ribbon />
      <FormulaBar />
      <Sheet />
      <SheetTabs />
      <StatusBar />
    </div>
  );
}
